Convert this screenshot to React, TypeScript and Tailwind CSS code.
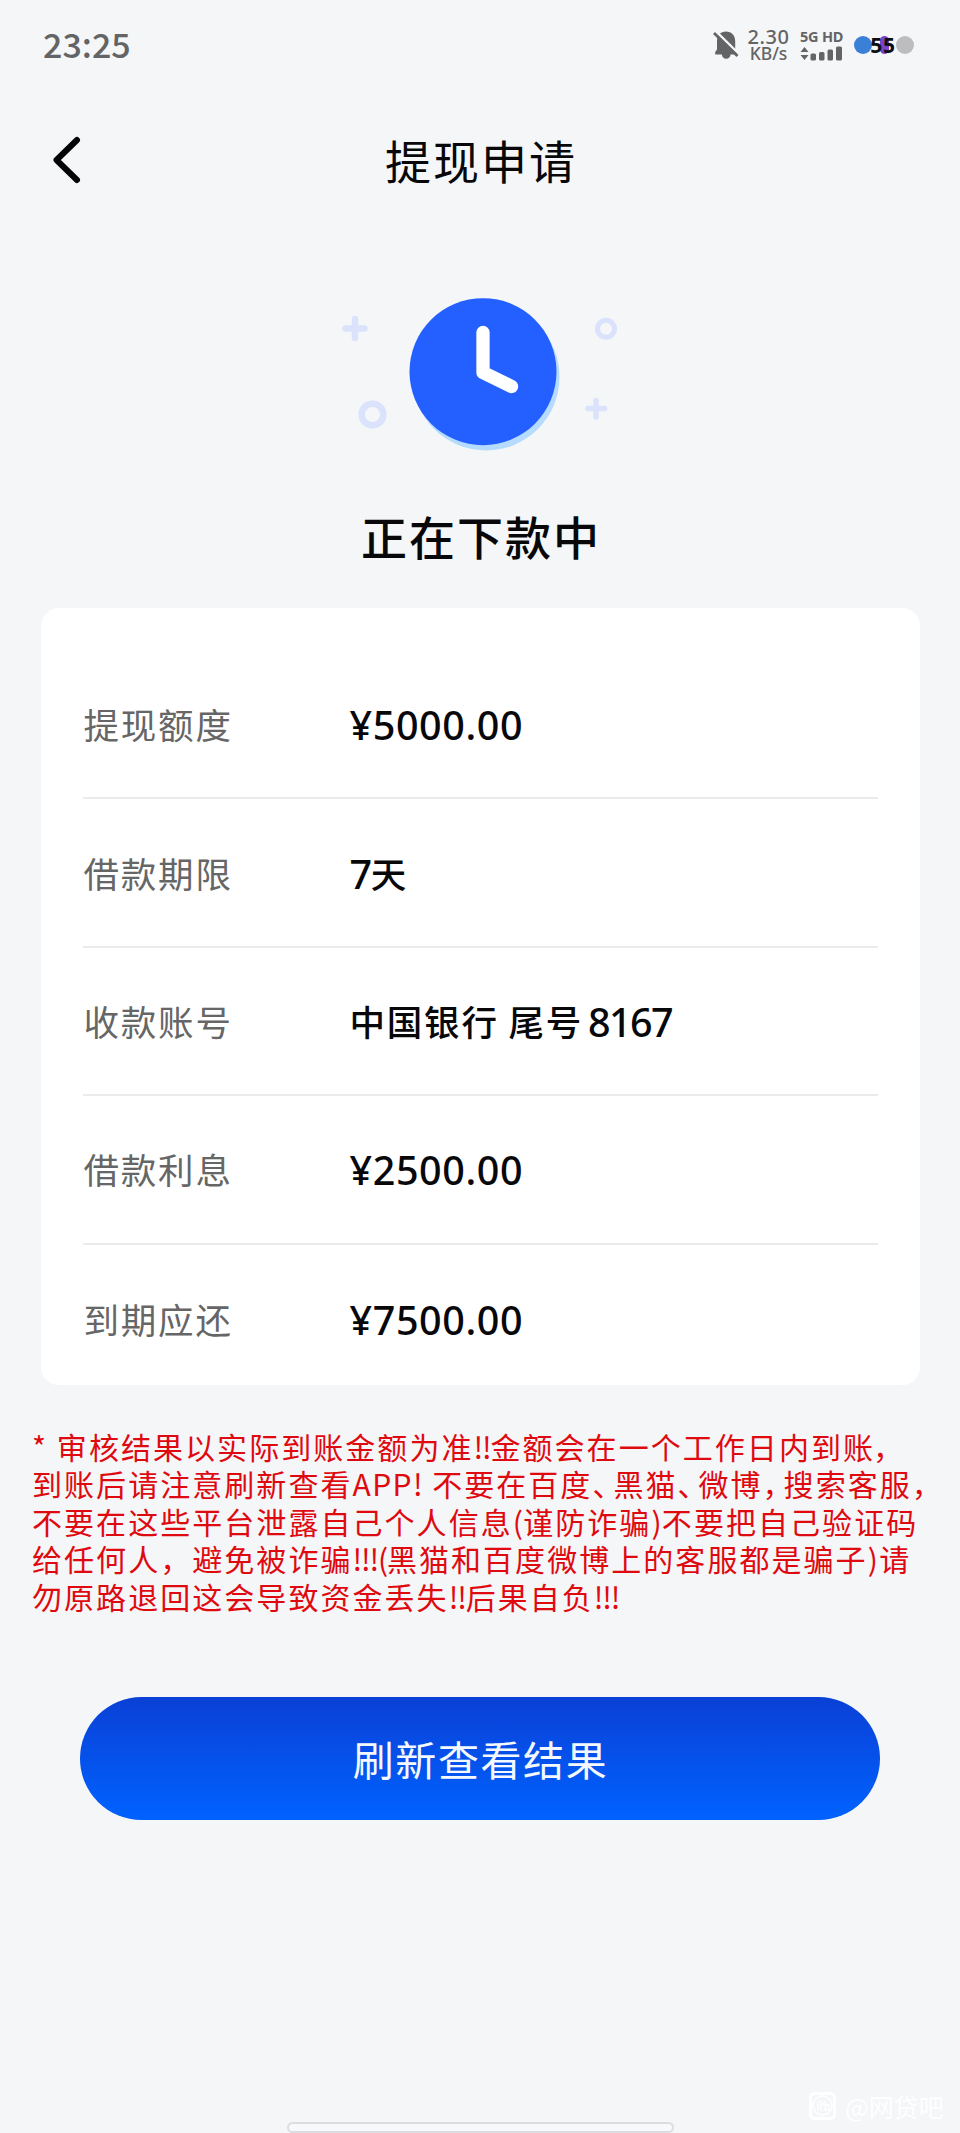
import type { ReactNode } from "react";

const cjk = "font-['Noto_Sans_CJK_SC',sans-serif]";
const latin = "font-['Noto_Sans','Noto_Sans_CJK_SC',sans-serif]";

function StatusBar() {
  return (
    <header className="flex h-[90px] items-center justify-between pr-[46px] pl-[43px] text-[#636466]">
      <span className={`${cjk} h-[90px] text-[34px] leading-[87px] font-medium tracking-[0px]`}>23:25</span>
      <div className="flex h-[90px] items-center">
        <svg className="h-[30px] w-[26px]" viewBox="0 0 26 30" fill="currentColor">
          <path d="M13 1.500c5.500 0 9.200 4 9.200 9.500v8.500l1.800 2.500v2.500h-6.500a4.300 4.300 0 0 1-8.600 0H2.200V22L4 19.500V11C4 5.500 7.500 1.500 13 1.500z" />
          <path d="M2 0.500 27 25" stroke="#f4f6f8" strokeWidth="2.600" />
          <path d="M1 3 24.500 26" stroke="currentColor" strokeWidth="2.800" />
        </svg>
        <div className="ml-[8px] flex w-[43px] flex-col items-center">
          <span className={`${latin} text-[20px] leading-[17px] font-medium tracking-[0.500px]`}>2.30</span>
          <span className={`${latin} text-[17.500px] leading-[17px] font-medium`}>KB/s</span>
        </div>
        <div className="ml-[10px] flex w-[43px] flex-col gap-[3px]">
          <span className={`${latin} text-[14.500px] leading-[13px] font-bold tracking-[-0.200px] whitespace-nowrap`}>5G HD</span>
          <svg className="h-[15px] w-[43px]" viewBox="0 0 43 15" fill="currentColor">
            <path d="M4.500 1 8.500 6H.5zM4.500 14 .5 9h8z" />
            <rect x="10.500" y="7.500" width="5.500" height="7" rx="1.500" />
            <rect x="19" y="6" width="5.500" height="8.500" rx="1.500" />
            <rect x="27.500" y="3.500" width="5.500" height="11" rx="1.500" />
            <rect x="36" y="0.500" width="6" height="14" rx="1.500" />
          </svg>
        </div>
        <div className="relative ml-[11px] flex h-[18px] w-[60px] items-center justify-between">
          <span className="size-[18px] rounded-full bg-[#3a80d6]" />
          <span className="h-[18px] w-[9px] rounded-full bg-[#7a45c4]" />
          <span className="size-[18px] rounded-full bg-[#bdbdbf]" />
          <span className={`${latin} absolute inset-0 -left-[2px] text-center text-[21px] leading-[18px] font-bold tracking-[0.800px] text-[#0d0d14]`}>55</span>
        </div>
      </div>
    </header>
  );
}

function TitleBar() {
  return (
    <div className="grid h-[144px] grid-cols-[120px_1fr_120px] items-center">
      <button className="ml-[50px] h-[52px] w-[34px]" aria-label="返回">
        <svg className="h-[52px] w-[34px]" viewBox="0 0 34 52" fill="none" stroke="#050507" strokeWidth="6" strokeLinecap="round" strokeLinejoin="round">
          <path d="M27 4 6.500 24 27 44" />
        </svg>
      </button>
      <h1 className={`${cjk} h-[144px] pl-[2px] text-center text-[46px] leading-[139px] font-normal tracking-[2px] text-[#08080a]`}>提现申请</h1>
    </div>
  );
}

function ClockArt() {
  return (
    <svg className="mx-auto h-[180px] w-[320px]" viewBox="320 280 320 180" fill="none">
      <circle cx="486" cy="377" r="73.500" fill="#b5dcff" />
      <circle cx="483" cy="371.700" r="73.500" fill="#245fff" />
      <path d="M483 332.500V372.500L511.500 386.500" stroke="#fff" strokeWidth="13.300" strokeLinecap="round" strokeLinejoin="round" />
      <g stroke="#dbe2fb" strokeLinecap="round">
        <path d="M345.500 328.500h19M355 319v19" strokeWidth="6.500" />
        <path d="M588 408.500h16.500M596 400.500v16.500" strokeWidth="5.500" />
        <circle cx="606" cy="328.700" r="8.500" strokeWidth="5" />
        <circle cx="372.500" cy="414.500" r="10.800" strokeWidth="6.500" />
      </g>
    </svg>
  );
}

function Num({ children }: { children: ReactNode }) {
  return <span className={`${latin} translate-y-[1px] text-[39.500px] tracking-[0.600px]`}>{children}</span>;
}

const rows: { label: string; value: ReactNode }[] = [
  { label: "提现额度", value: <Num>¥5000.00</Num> },
  { label: "借款期限", value: <><Num>7</Num><span className="-ml-[2px]">天</span></> },
  {
    label: "收款账号",
    value: <>中国银行 尾号<span className={`${latin} ml-[5px] translate-y-[1px] text-[39.500px] tracking-[-1.600px]`}>8167</span></>,
  },
  { label: "借款利息", value: <Num>¥2500.00</Num> },
  { label: "到期应还", value: <Num>¥7500.00</Num> },
];

function DetailCard() {
  return (
    <section className="mx-auto mt-[43px] h-[777px] w-[879px] rounded-[18px] bg-white px-[42px] pt-[43px]">
      {rows.map((row) => (
        <div key={row.label} className="flex h-[148.400px] items-center border-b-2 border-[#ebebed] pl-[1px] last:border-b-0">
          <span className={`${cjk} w-[266px] text-[35.500px] leading-[60px] tracking-[1.800px] text-[#666]`}>{row.label}</span>
          <span className={`${cjk} flex items-baseline text-[35.500px] leading-[60px] font-medium tracking-[1.800px] whitespace-pre text-[#08080a]`}>{row.value}</span>
        </div>
      ))}
    </section>
  );
}

function Half({ children }: { children: ReactNode }) {
  return <span className="tracking-[-9px]">{children}</span>;
}

function Bang({ children }: { children: ReactNode }) {
  return <span className="tracking-[-1.200px]">{children}</span>;
}

function Notice() {
  return (
    <div className={`${cjk} mt-[43px] ml-[32px] text-[30px] leading-[37.400px] tracking-[2.050px] whitespace-pre text-[#df0a10]`}>
      <p>* 审核结果以实际到账金额为准<Bang>!!</Bang>金额会在一个工作日内到账<span className="-ml-[2px]">，</span></p>
      <p>到账后请注意刷新查看<span className="tracking-[1.400px]">APP! </span>不要在百度<Half>、</Half>黑猫<Half>、</Half>微博<Half>，</Half>搜索客服，</p>
      <p>不要在这些平台泄露自己个人信息<span className="tracking-[0.300px]">(</span>谨防诈骗<span className="tracking-[0.300px]">)</span>不要把自己验证码</p>
      <p>给任何人，避免被诈骗<Bang>!!!(</Bang>黑猫和百度微博上的客服都是骗子<span className="tracking-[1.300px]">)</span>请</p>
      <p>勿原路退回这会导致资金丢失<Bang>!!</Bang>后果自负<Bang>!!!</Bang></p>
    </div>
  );
}

function Watermark() {
  return (
    <div className="absolute top-[2089px] left-[809px] flex h-[34px] items-center gap-[9px] text-white">
      <svg className="h-[28px] w-[27px]" viewBox="0 0 27 28" fill="none" stroke="currentColor">
        <rect x="1.500" y="1.500" width="24" height="25" rx="4" strokeWidth="3" />
        <circle cx="13.500" cy="13.500" r="9.500" strokeWidth="1.500" />
        <path d="M9 9v9M12 8v10M12 12h3M16 8v10h4v-5h-4" strokeWidth="1.300" />
      </svg>
      <span className={`${cjk} text-[25px] leading-[32px] whitespace-nowrap`}>@网贷吧</span>
    </div>
  );
}

export default function App() {
  return (
    <main className="relative h-[2133px] w-[960px] overflow-hidden bg-[#f4f6f8]">
      <StatusBar />
      <TitleBar />
      <div className="mt-[46px]">
        <ClockArt />
      </div>
      <h2 className={`${cjk} mt-[45px] pl-[2px] text-center text-[46px] leading-[60px] font-medium tracking-[2px] text-[#08080a]`}>正在下款中</h2>
      <DetailCard />
      <Notice />
      <button className={`${cjk} mx-auto mt-[82px] flex h-[123px] w-[800px] items-center justify-center rounded-full bg-linear-to-b from-[#0a40d6] to-[#0062ff] pb-[2px] pl-[1px] text-[41px] leading-[60px] tracking-[1.600px] text-[#f4f8ff]`}>
        刷新查看结果
      </button>
      <div className="mx-auto mt-[302px] h-[11px] w-[387px] rounded-full border-2 border-[#dcdde0] bg-[#f8f9fb]" />
      <Watermark />
    </main>
  );
}
